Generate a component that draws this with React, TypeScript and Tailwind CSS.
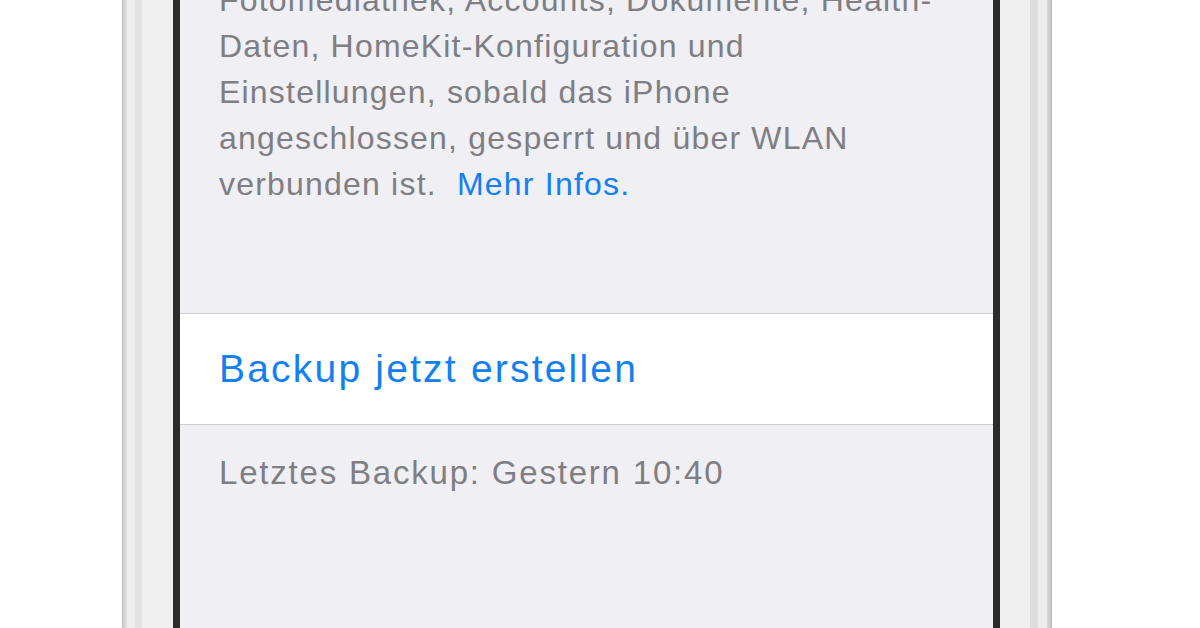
import React from "react";

export default function App() {
  const font = { fontFamily: '"Liberation Sans", Arial, sans-serif' };
  return (
    <div className="w-[1200px] h-[628px] bg-white overflow-hidden flex" style={font}>
      <div className="w-[122px] shrink-0 bg-white" />
      {/* left bezel */}
      <div className="w-[51px] shrink-0 flex">
        <div className="w-[1px] bg-[#bdbdbd]" />
        <div className="w-[4px] bg-gradient-to-r from-[#cfcfcf] to-[#e2e2e2]" />
        <div className="w-[8px] bg-[#eeeeee]" />
        <div className="w-[7px] bg-[#e3e3e3]" />
        <div className="flex-1 bg-[#f0f0f0]" />
      </div>
      <div className="w-[7px] shrink-0 bg-[#2a2b2b]" />
      {/* screen */}
      <div className="w-[813px] shrink-0 bg-[#efeff4] flex flex-col overflow-hidden">
        <div className="pl-[39px] mt-[-23px] text-[32px] leading-[46px] tracking-[1.2px] text-[#7e7e83] flex flex-col">
          <div className="whitespace-nowrap">Fotomediathek, Accounts, Dokumente, Health-</div>
          <div className="whitespace-nowrap">Daten, HomeKit-Konfiguration und</div>
          <div className="whitespace-nowrap">Einstellungen, sobald das iPhone</div>
          <div className="whitespace-nowrap">angeschlossen, gesperrt und über WLAN</div>
          <div className="whitespace-nowrap">
            verbunden ist.&nbsp; <span className="text-[#1380f2]">Mehr Infos.</span>
          </div>
        </div>
        <div className="mt-[106px] h-[112px] bg-white border-y border-[#cfced4] flex items-center pl-[39px]">
          <span className="text-[39px] tracking-[2.2px] text-[#1380f2] whitespace-nowrap">Backup jetzt erstellen</span>
        </div>
        <div className="mt-[25px] pl-[39px] text-[33px] leading-[46px] tracking-[1.8px] text-[#7e7e83] whitespace-nowrap">
          Letztes Backup: Gestern 10:40
        </div>
      </div>
      <div className="w-[7px] shrink-0 bg-[#2a2b2b]" />
      {/* right bezel */}
      <div className="w-[52px] shrink-0 flex">
        <div className="w-[30px] bg-[#f0f0f0]" />
        <div className="w-[8px] bg-[#dddddd]" />
        <div className="w-[9px] bg-[#ededed]" />
        <div className="w-[4px] bg-gradient-to-r from-[#dadada] to-[#c4c4c4]" />
        <div className="w-[1px] bg-[#b8b8b8]" />
      </div>
      <div className="flex-1 bg-white" />
    </div>
  );
}
